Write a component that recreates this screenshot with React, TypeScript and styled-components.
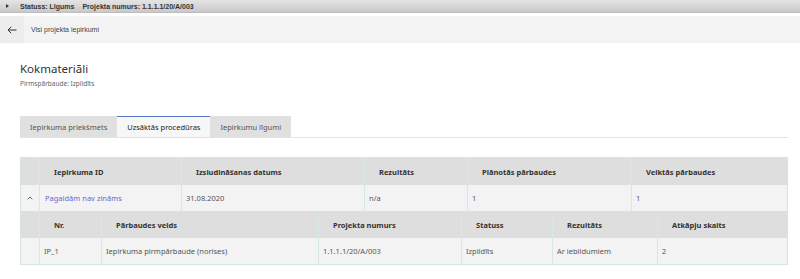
import React from "react";
import styled, { createGlobalStyle } from "styled-components";

const Global = createGlobalStyle`
  html, body { margin: 0; padding: 0; background: #ffffff; }
  body { font-family: "Noto Sans", "Open Sans", sans-serif; color: #333; }
  * { box-sizing: border-box; }
`;

const StatusBar = styled.div`
  height: 13px;
  display: flex;
  align-items: center;
  gap: 8px;
  padding-left: 6px;
  background: linear-gradient(#e4e4e4, #c9c9c9);
  border-bottom: 1px solid #bdbdbd;
  font-family: "Liberation Sans", Arial, sans-serif;
  font-weight: bold;
  font-size: 7px;
  color: #333;
`;

const Caret = styled.span`
  display: inline-block;
  width: 0;
  height: 0;
  border-top: 2px solid transparent;
  border-bottom: 2px solid transparent;
  border-left: 3px solid #333;
  margin-right: 3px;
`;

const NavBar = styled.div`
  margin-top: 3px;
  height: 27px;
  display: flex;
  align-items: stretch;
  background: #f3f3f3;
  font-family: "Liberation Sans", Arial, sans-serif;
  font-size: 7px;
  color: #444;
`;

const BackBox = styled.div`
  width: 24px;
  display: flex;
  align-items: center;
  justify-content: center;
  background: #ededed;
`;

const NavText = styled.div`
  display: flex;
  align-items: center;
  padding-left: 7px;
`;

const Content = styled.div`
  padding: 0 12px 0 20px;
`;

const Title = styled.h1`
  margin: 19px 0 0;
  font-size: 11.5px;
  line-height: 14px;
  font-weight: 400;
  color: #333;
`;

const Subtitle = styled.div`
  margin-top: 3px;
  font-size: 6.5px;
  line-height: 9px;
  color: #666;
`;

const Tabs = styled.div`
  margin-top: 28px;
  display: flex;
  border-bottom: 1px solid #e3e3e3;
`;

const Tab = styled.div<{ $active?: boolean }>`
  height: 21px;
  display: flex;
  align-items: center;
  padding: 0 10px;
  font-size: 7.5px;
  color: ${(p) => (p.$active ? "#222" : "#555")};
  background: ${(p) => (p.$active ? "#f7f7f7" : "#e0e0e0")};
  border-top: 1px solid ${(p) => (p.$active ? "#5a78c4" : "#e0e0e0")};
`;

const Table = styled.div`
  margin-top: 19px;
  border: 1px solid #d5e5e5;
  width: 768px;
`;

const Row = styled.div<{ $cols: string; $head?: boolean; $h: number }>`
  display: grid;
  grid-template-columns: ${(p) => p.$cols};
  height: ${(p) => p.$h}px;
  background: ${(p) => (p.$head ? "#dedede" : "#f3f3f3")};
  font-size: 7.5px;
  font-weight: ${(p) => (p.$head ? 700 : 400)};
  color: ${(p) => (p.$head ? "#333" : "#555")};
`;

const Cell = styled.div<{ $head?: boolean }>`
  display: flex;
  align-items: center;
  padding-left: ${(p) => (p.$head ? "14px" : "4px")};
  border-left: 1px solid #d8e6e6;
  white-space: nowrap;
  &:first-child { border-left: none; }
`;

const ToggleCell = styled(Cell)`
  justify-content: center;
  padding-left: 0;
`;

const Link = styled.a`
  color: #6868cc;
  text-decoration: none;
  padding-left: 1px;
`;

const mainCols = "18px 142px 183px 103px 164px 156px";
const subCols = "18px 62px 217px 143px 91px 105px 130px";

export default function App() {
  return (
    <>
      <Global />
      <StatusBar>
        <Caret />
        <span>Statuss: Līgums</span>
        <span>Projekta numurs: 1.1.1.1/20/A/003</span>
      </StatusBar>
      <NavBar>
        <BackBox>
          <svg width="10" height="8" viewBox="0 0 10 8">
            <path d="M9.5 4H1M4.2 0.8L1 4l3.2 3.2" fill="none" stroke="#333" strokeWidth="1" />
          </svg>
        </BackBox>
        <NavText>Visi projekta iepirkumi</NavText>
      </NavBar>
      <Content>
        <Title>Kokmateriāli</Title>
        <Subtitle>Pirmspārbaude: Izpildīts</Subtitle>
        <Tabs>
          <Tab>Iepirkuma priekšmets</Tab>
          <Tab $active>Uzsāktās procedūras</Tab>
          <Tab>Iepirkumu līgumi</Tab>
        </Tabs>
        <Table>
          <Row $cols={mainCols} $head $h={27}>
            <Cell $head />
            <Cell $head>Iepirkuma ID</Cell>
            <Cell $head>Izsludināšanas datums</Cell>
            <Cell $head>Rezultāts</Cell>
            <Cell $head>Plānotās pārbaudes</Cell>
            <Cell $head>Veiktās pārbaudes</Cell>
          </Row>
          <Row $cols={mainCols} $h={26}>
            <ToggleCell>
              <svg width="6" height="4" viewBox="0 0 6 4">
                <path d="M0.7 3.3L3 1l2.3 2.3" fill="none" stroke="#555" strokeWidth="0.9" />
              </svg>
            </ToggleCell>
            <Cell><Link href="#">Pagaidām nav zināms</Link></Cell>
            <Cell>31.08.2020</Cell>
            <Cell>n/a</Cell>
            <Cell>1</Cell>
            <Cell>1</Cell>
          </Row>
          <Row $cols={subCols} $head $h={27}>
            <Cell $head />
            <Cell $head>Nr.</Cell>
            <Cell $head>Pārbaudes veids</Cell>
            <Cell $head>Projekta numurs</Cell>
            <Cell $head>Statuss</Cell>
            <Cell $head>Rezultāts</Cell>
            <Cell $head>Atkāpju skaits</Cell>
          </Row>
          <Row $cols={subCols} $h={26}>
            <Cell />
            <Cell>IP_1</Cell>
            <Cell>Iepirkuma pirmpārbaude (norises)</Cell>
            <Cell>1.1.1.1/20/A/003</Cell>
            <Cell>Izpildīts</Cell>
            <Cell>Ar iebildumiem</Cell>
            <Cell>2</Cell>
          </Row>
        </Table>
      </Content>
    </>
  );
}
